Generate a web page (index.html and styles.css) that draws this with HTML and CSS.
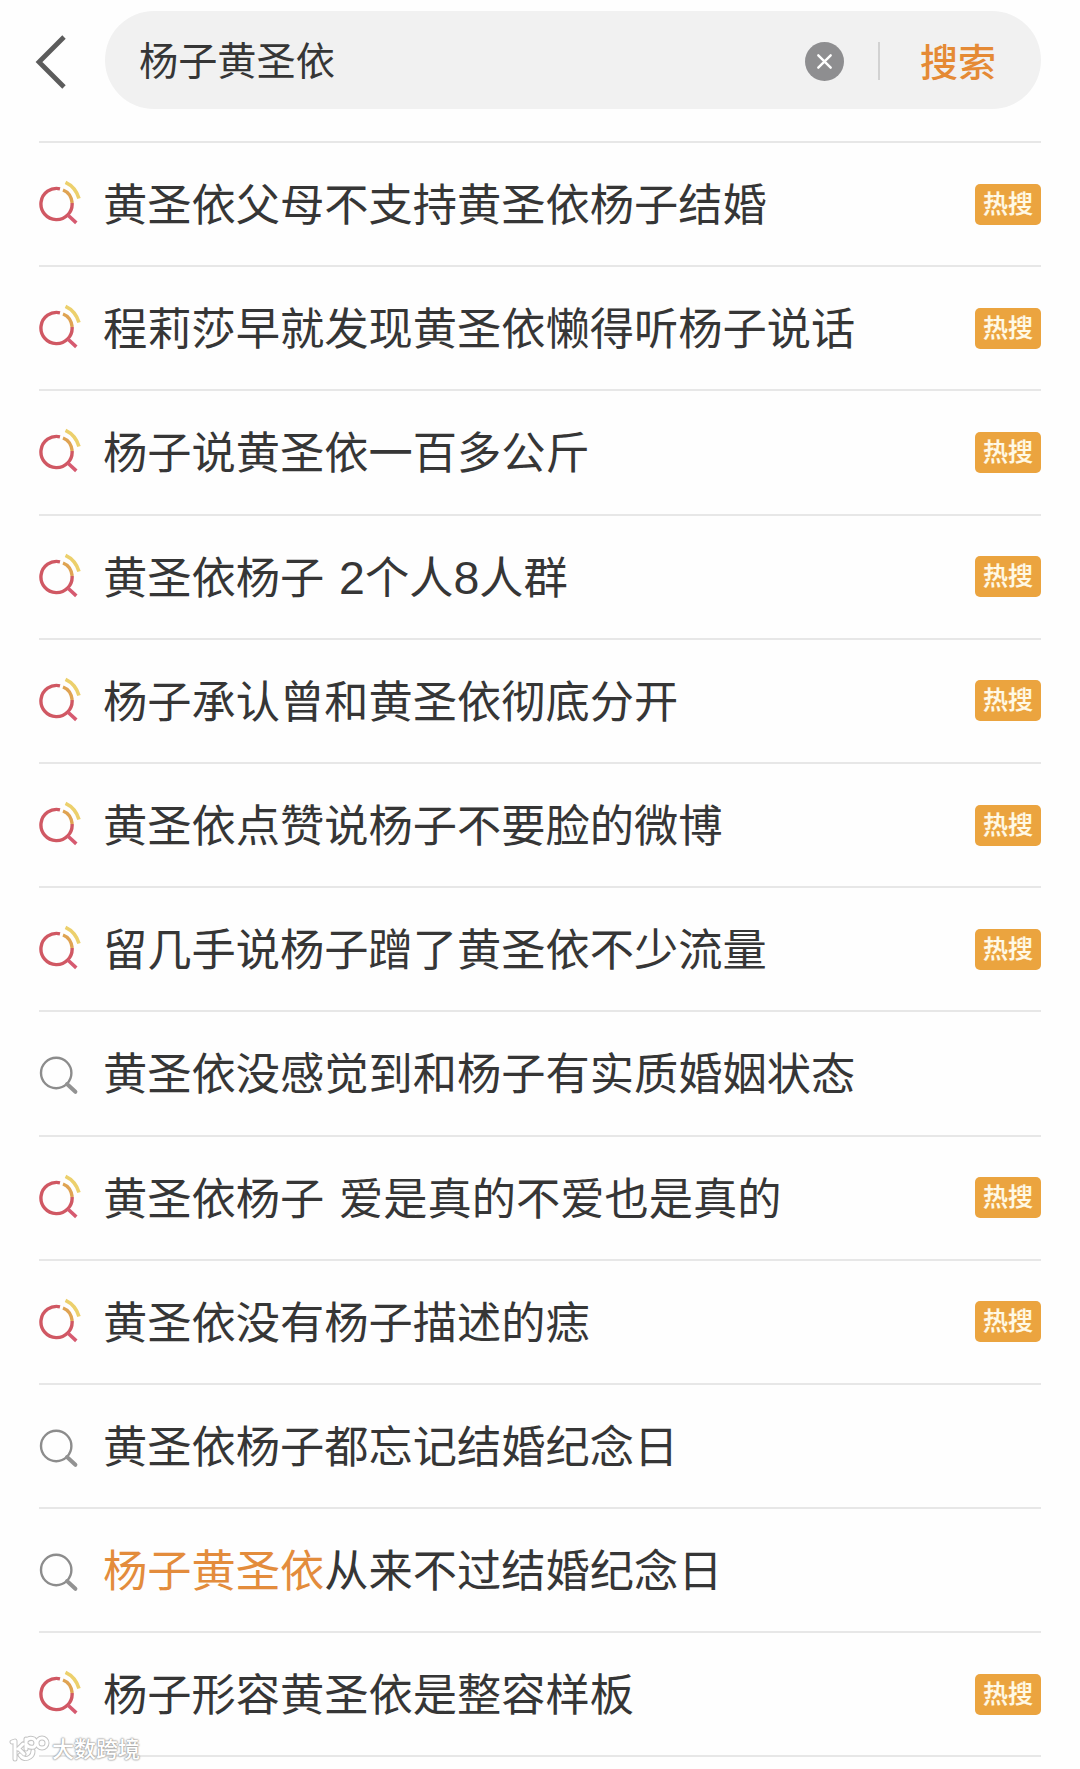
FILE: index.html
```html
<!DOCTYPE html>
<html lang="zh-CN">
<head>
    <meta charset="UTF-8">
    <meta name="viewport" content="width=device-width, initial-scale=1.0">
    <title>搜索</title>
    <link rel="stylesheet" href="styles.css">
</head>
<body>
    <svg class="symbols">
        <symbol id="hot" viewBox="0 0 46 48">
            <path d="M21 8.8A15.6 15.6 0 1 0 33.1 23" fill="none" stroke="#d05863" stroke-width="3.4"/>
            <path d="M28.8 35l8.5 7.8" fill="none" stroke="#d65a70" stroke-width="3.6"/>
            <path d="M24 10Q32 13 33.2 23" fill="none" stroke="#dfa352" stroke-width="3.4"/>
            <path d="M26.5 2.4Q36.5 7 40 18.5" fill="none" stroke="#ecd06c" stroke-width="3.6"/>
        </symbol>
        <symbol id="normal" viewBox="0 0 46 48">
            <circle cx="17.2" cy="24" r="15.2" fill="none" stroke="#8c8c8c" stroke-width="2.4"/>
            <path d="M28 35l8.4 7.8" fill="none" stroke="#929292" stroke-width="4" stroke-linecap="round"/>
        </symbol>
    </svg>
    <div class="header">
        <svg class="back" viewBox="0 0 34 54"><path d="M31 2L6 27l25 25" fill="none" stroke="#5c5c5c" stroke-width="4.8"/></svg>
        <div class="search">
            <span class="keyword">杨子黄圣依</span>
            <svg class="clear" viewBox="0 0 39 39"><circle cx="19.5" cy="19.5" r="19.5" fill="#8e8e90"/><path d="M13.3 13.3l12.4 12.4m0-12.4l-12.4 12.4" stroke="#fff" stroke-width="2.4" stroke-linecap="round"/></svg>
            <span class="line"></span>
            <span class="btn">搜索</span>
        </div>
    </div>
    <ul class="list">
        <li class="item"><svg class="icon"><use href="#hot"/></svg><span class="text">黄圣依父母不支持黄圣依杨子结婚</span><span class="tag">热搜</span></li>
        <li class="item"><svg class="icon"><use href="#hot"/></svg><span class="text">程莉莎早就发现黄圣依懒得听杨子说话</span><span class="tag">热搜</span></li>
        <li class="item"><svg class="icon"><use href="#hot"/></svg><span class="text">杨子说黄圣依一百多公斤</span><span class="tag">热搜</span></li>
        <li class="item"><svg class="icon"><use href="#hot"/></svg><span class="text">黄圣依杨子 <span class="num">2</span>个人<span class="num">8</span>人群</span><span class="tag">热搜</span></li>
        <li class="item"><svg class="icon"><use href="#hot"/></svg><span class="text">杨子承认曾和黄圣依彻底分开</span><span class="tag">热搜</span></li>
        <li class="item"><svg class="icon"><use href="#hot"/></svg><span class="text">黄圣依点赞说杨子不要脸的微博</span><span class="tag">热搜</span></li>
        <li class="item"><svg class="icon"><use href="#hot"/></svg><span class="text">留几手说杨子蹭了黄圣依不少流量</span><span class="tag">热搜</span></li>
        <li class="item"><svg class="icon"><use href="#normal"/></svg><span class="text">黄圣依没感觉到和杨子有实质婚姻状态</span></li>
        <li class="item"><svg class="icon"><use href="#hot"/></svg><span class="text">黄圣依杨子 爱是真的不爱也是真的</span><span class="tag">热搜</span></li>
        <li class="item"><svg class="icon"><use href="#hot"/></svg><span class="text">黄圣依没有杨子描述的痣</span><span class="tag">热搜</span></li>
        <li class="item"><svg class="icon"><use href="#normal"/></svg><span class="text">黄圣依杨子都忘记结婚纪念日</span></li>
        <li class="item"><svg class="icon"><use href="#normal"/></svg><span class="text"><em>杨子黄圣依</em>从来不过结婚纪念日</span></li>
        <li class="item"><svg class="icon"><use href="#hot"/></svg><span class="text">杨子形容黄圣依是整容样板</span><span class="tag">热搜</span></li>
    </ul>
    <div class="watermark">
        <svg class="logo" viewBox="0 0 42 30">
            <g fill="none" stroke-linecap="round" stroke-linejoin="round">
                <path class="edge" d="M3 7l3-1v18M14 9l-5 5M10 14l5 5M11 20Q15 26 21 22Q24 20 24 16M17 14V4M17 6Q20 2 25 4Q29 8 25 12Q20 13 18 10M28 8a5 5 0 1 0 10 0a5 5 0 1 0-10 0"/>
                <path class="core" d="M3 7l3-1v18M14 9l-5 5M10 14l5 5M11 20Q15 26 21 22Q24 20 24 16M17 14V4M17 6Q20 2 25 4Q29 8 25 12Q20 13 18 10M28 8a5 5 0 1 0 10 0a5 5 0 1 0-10 0"/>
            </g>
        </svg>
        <span>大数跨境</span>
    </div>
</body>
</html>
```

FILE: styles.css
```css
body{
    margin: 0;
    height: 1769px;
    overflow: hidden;
    position: relative;
    background-color: #fefefe;
    color: #363636;
    font-family: "Liberation Sans", "Noto Sans CJK SC", sans-serif;
}
.symbols{
    display: none;
}
.header{
    display: flex;
    align-items: center;
    height: 98px;
    padding: 11px 39px 32px 33px;
}
.back{
    width: 34px;
    height: 54px;
    margin-right: 38px;
    margin-top: 3px;
}
.search{
    flex: 1;
    display: flex;
    align-items: center;
    height: 98px;
    padding: 0 45px 0 34px;
    box-sizing: border-box;
    border-radius: 49px;
    background-color: #f1f1f1;
}
.keyword{
    flex: 1;
    padding-top: 4px;
    font-size: 39.2px;
    line-height: 60px;
}
.clear{
    width: 39px;
    height: 39px;
    margin-top: 2px;
}
.line{
    width: 2px;
    height: 38px;
    margin: 2px 40px 0 34px;
    background-color: #d2d2d2;
}
.btn{
    padding-top: 5px;
    color: #e58a35;
    font-size: 38px;
    font-weight: 500;
    line-height: 60px;
}
.list{
    list-style: none;
    margin: 0 39px;
    padding: 0;
    border-top: 2px solid #e7e7e7;
}
.item{
    display: flex;
    align-items: center;
    height: 124.2px;
    box-sizing: border-box;
    border-bottom: 2px solid #e7e7e7;
}
.icon{
    width: 46px;
    height: 48px;
    margin-right: 18px;
}
.text{
    flex: 1;
    padding-top: 4px;
    font-size: 44.25px;
    line-height: 60px;
    white-space: nowrap;
    word-spacing: 2.5px;
}
.text em{
    font-style: normal;
    color: #e38c3c;
}
.num{
    font-size: 46.5px;
    line-height: 1;
}
.tag{
    width: 66px;
    height: 41px;
    border-radius: 5px;
    background-color: #eba43f;
    color: #fff9e6;
    font-size: 25px;
    font-weight: 500;
    line-height: 40px;
    text-align: center;
    -webkit-text-stroke: 0.2px #fff9e6;
}
.watermark{
    position: absolute;
    left: 9px;
    top: 1734px;
    display: flex;
    align-items: center;
    color: #fff;
    font-size: 22px;
    font-weight: 500;
    line-height: 32px;
    text-shadow: 0 0 2px #999, 0 0 2px #999, 0 0 1px #aaa;
}
.logo{
    width: 42px;
    height: 30px;
    margin-right: 1px;
}
.edge{
    stroke: #c4c4c4;
    stroke-width: 5;
}
.core{
    stroke: #fff;
    stroke-width: 3;
}
```
